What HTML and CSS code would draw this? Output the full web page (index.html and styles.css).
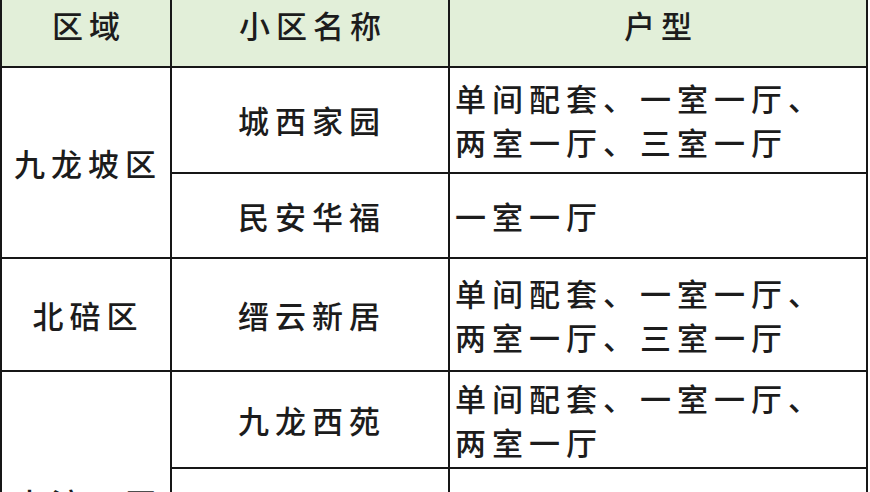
FILE: index.html
```html
<!DOCTYPE html>
<html lang="zh-CN">
<head>
<meta charset="utf-8">
<link rel="stylesheet" href="styles.css">
</head>
<body>
<table class="housing">
  <colgroup>
    <col class="c-area">
    <col class="c-name">
    <col class="c-type">
  </colgroup>
  <thead>
    <tr class="r-head">
      <th>区域</th>
      <th>小区名称</th>
      <th>户型</th>
    </tr>
  </thead>
  <tbody>
    <tr class="r1">
      <td class="area" rowspan="2">九龙坡区</td>
      <td class="name">城西家园</td>
      <td class="type">单间配套、一室一厅、<br>两室一厅、三室一厅</td>
    </tr>
    <tr class="r2">
      <td class="name">民安华福</td>
      <td class="type">一室一厅</td>
    </tr>
    <tr class="r3">
      <td class="area">北碚区</td>
      <td class="name">缙云新居</td>
      <td class="type">单间配套、一室一厅、<br>两室一厅、三室一厅</td>
    </tr>
    <tr class="r4">
      <td class="area" rowspan="2">大渡口区</td>
      <td class="name">九龙西苑</td>
      <td class="type">单间配套、一室一厅、<br>两室一厅</td>
    </tr>
    <tr class="r5">
      <td class="name"></td>
      <td class="type"></td>
    </tr>
  </tbody>
</table>
</body>
</html>
```

FILE: styles.css
```css
html, body {
  margin: 0;
  padding: 0;
  background: #ffffff;
  overflow: hidden;
}

.housing {
  border-collapse: collapse;
  table-layout: fixed;
  width: 866px;
  margin-top: -9px;
  margin-left: 0;
  font-family: "Noto Sans CJK SC", "Noto Sans", sans-serif;
  font-size: 31px;
  color: #1c1c1c;
}

.c-area { width: 170px; }
.c-name { width: 278px; }
.c-type { width: 418px; }

.housing th,
.housing td {
  border: 2px solid #171717;
  padding: 0;
  vertical-align: middle;
  letter-spacing: 6px;
  font-weight: 500;
  line-height: 44px;
}

.housing th {
  background: #e2efd9;
  text-align: center;
  padding-left: 6px;
  padding-bottom: 9px;
}

.housing .area,
.housing .name {
  text-align: center;
  padding-left: 4px;
}

.housing .type {
  text-align: left;
  padding-left: 5px;
}

.r-head { height: 75px; }
.r1 { height: 106px; }
.r2 { height: 85px; }
.r3 { height: 113px; }
.r4 { height: 97px; }
.r5 { height: 167px; }
```
